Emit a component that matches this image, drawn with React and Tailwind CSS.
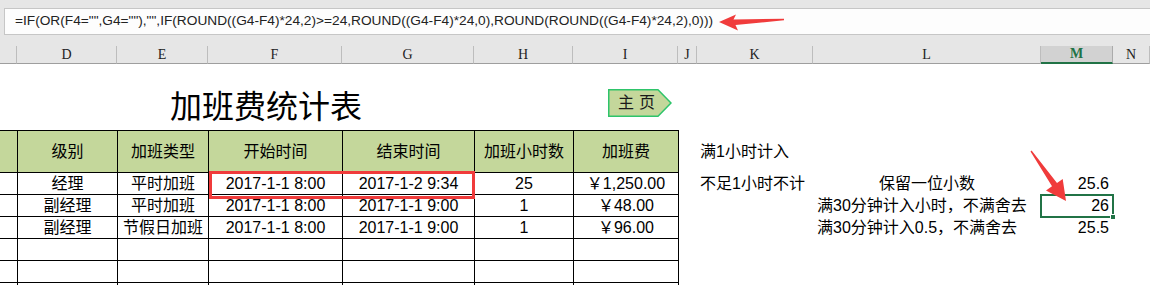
import React from 'react';

const GRID =
  'grid grid-cols-[17px_100px_91px_134px_132px_99px_105px_19px_116px_228px_72px_37px]';

const FONT = "font-['Liberation_Sans','Noto_Sans_CJK_SC',sans-serif]";

const FORMULA =
  '=IF(OR(F4="",G4=""),"",IF(ROUND((G4-F4)*24,2)>=24,ROUND((G4-F4)*24,0),ROUND(ROUND((G4-F4)*24,2),0)))';

const letters = [
  { k: 'C', w: 'w-[17px]', t: '' },
  { k: 'D', w: 'w-[100px]', t: 'D' },
  { k: 'E', w: 'w-[91px]', t: 'E' },
  { k: 'F', w: 'w-[134px]', t: 'F' },
  { k: 'G', w: 'w-[132px]', t: 'G' },
  { k: 'H', w: 'w-[99px]', t: 'H' },
  { k: 'I', w: 'w-[105px]', t: 'I' },
  { k: 'J', w: 'w-[19px]', t: 'J' },
  { k: 'K', w: 'w-[116px]', t: 'K' },
  { k: 'L', w: 'w-[228px]', t: 'L' },
  { k: 'M', w: 'w-[72px]', t: 'M' },
  { k: 'N', w: 'w-[37px]', t: 'N' },
];

const rows = [
  ['经理', '平时加班', '2017-1-1 8:00', '2017-1-2 9:34', '25', '￥1,250.00'],
  ['副经理', '平时加班', '2017-1-1 8:00', '2017-1-1 9:00', '1', '￥48.00'],
  ['副经理', '节假日加班', '2017-1-1 8:00', '2017-1-1 9:00', '1', '￥96.00'],
  ['', '', '', '', '', ''],
  ['', '', '', '', '', ''],
  ['', '', '', '', '', ''],
];

const side = [
  { k: '不足1小时不计', l: '保留一位小数', lc: true, m: '25.6' },
  { k: '', l: '满30分钟计入小时，不满舍去', m: '26', sel: true },
  { k: '', l: '满30分钟计入0.5，不满舍去', m: '25.5' },
  { k: '', l: '', m: '' },
  { k: '', l: '', m: '' },
  { k: '', l: '', m: '' },
];

const HomeButton = () => (
  <div className="relative w-[64px] h-[28px] mt-[25px]">
    <svg className="absolute inset-0" width="64" height="28" viewBox="0 0 64 28">
      <polygon
        points="0.75,0.75 50,0.75 63,14 50,27.25 0.75,27.25"
        fill="#c4d79b"
        stroke="#2ec46a"
        strokeWidth="1.5"
      />
    </svg>
    <div className="relative h-full flex items-center pl-[10px] text-[16px] leading-none tracking-[5px] text-[#1a1a1a]">
      主页
    </div>
  </div>
);

export default function App() {
  return (
    <div className={`relative w-[1150px] h-[285px] overflow-hidden bg-white text-black ${FONT}`}>
      {/* formula bar */}
      <div className="h-[46px] bg-[#e6e6e6] pt-2 pl-1">
        <div className="h-[27px] bg-[#fdfdfd] border border-r-0 border-[#c6c6c6] pl-[10px] flex items-center text-[13.7px] text-[#222] whitespace-nowrap">
          {FORMULA}
        </div>
      </div>

      {/* column letters */}
      <div className="flex h-[18px] bg-[#e6e6e6] font-['Liberation_Serif',serif] text-[14px] leading-none">
        {letters.map((c) =>
          c.k === 'M' ? (
            <div
              key={c.k}
              className={`${c.w} shrink-0 flex items-center justify-center bg-[#d2d2d2] border-r border-[#ababab] border-b-2 border-b-[#217346] text-[#217346] font-bold`}
            >
              {c.t}
            </div>
          ) : (
            <div
              key={c.k}
              className={`${c.w} shrink-0 flex items-center justify-center border-r border-[#bdbdbd] border-b border-b-[#9e9e9e] text-[#222]`}
            >
              {c.t}
            </div>
          )
        )}
      </div>

      {/* title row */}
      <div className="h-[66px] flex">
        <div className="w-[608px] shrink-0 pl-[170px] pt-[27px] text-[32px] leading-[32px]">
          加班费统计表
        </div>
        <HomeButton />
      </div>

      {/* header row */}
      <div className={`${GRID} h-[43px] text-[16px] leading-none`}>
        <div className="bg-[#c4d79b] border-y border-black" />
        {['级别', '加班类型', '开始时间', '结束时间', '加班小时数', '加班费'].map((h) => (
          <div
            key={h}
            className="bg-[#c4d79b] border-y border-l border-black flex items-center justify-center"
          >
            {h}
          </div>
        ))}
        <div className="border-l border-black" />
        <div className="flex items-center pl-[3px]">满1小时计入</div>
        <div />
        <div />
        <div />
      </div>

      {/* data rows */}
      {rows.map((r, i) => (
        <div key={i} className={`${GRID} h-[22px] text-[16px] leading-none`}>
          <div className="border-b border-black" />
          {r.map((v, j) => (
            <div
              key={j}
              className="border-b border-l border-black flex items-center justify-center whitespace-nowrap"
            >
              {v}
            </div>
          ))}
          <div className="border-l border-black" />
          <div className="flex items-center pl-[3px] whitespace-nowrap">{side[i].k}</div>
          <div
            className={`flex items-center whitespace-nowrap ${
              side[i].lc ? 'justify-center' : 'pl-[4px]'
            }`}
          >
            {side[i].l}
          </div>
          <div className="relative flex items-center justify-end pr-[4px]">
            {side[i].m}
            {side[i].sel && (
              <div className="absolute -left-px -top-px -right-px -bottom-px border-2 border-[#217346]">
                <div className="absolute -right-[4px] -bottom-[4px] w-[6px] h-[6px] bg-[#217346] border border-white" />
              </div>
            )}
          </div>
          <div />
        </div>
      ))}

      {/* red highlight box */}
      <div className="absolute left-[209px] top-[171px] w-[266px] h-[28px] border-[3px] border-[#f03b3b] pointer-events-none" />

      {/* red arrows */}
      <svg
        className="absolute left-0 top-0 pointer-events-none"
        width="1150"
        height="285"
        viewBox="0 0 1150 285"
      >
        <polygon
          points="719,22 736,14.5 733.5,19.5 784,18.8 784,20.2 735.5,25 738,30.5"
          fill="#f03b3b"
        />
        <polygon
          points="1066,201 1046,190.5 1052,186.3 1030.5,151.6 1031.6,150.6 1057,182.9 1062.7,178.9"
          fill="#f03b3b"
        />
      </svg>
    </div>
  );
}
